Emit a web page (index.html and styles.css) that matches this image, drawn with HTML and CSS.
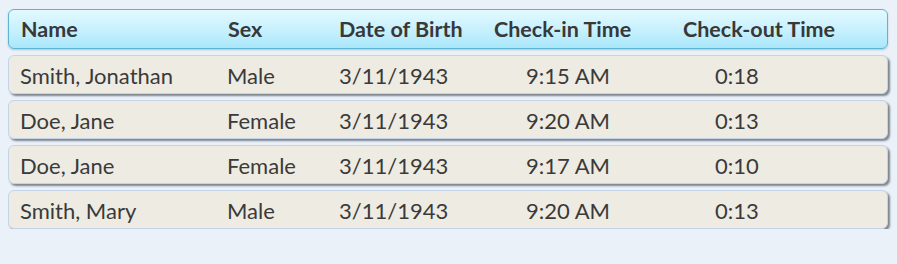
FILE: index.html
```html
<!DOCTYPE html>
<html>
<head>
<meta charset="utf-8">
<link rel="stylesheet" href="styles.css">
</head>
<body>
<div class="table">
  <div class="row head">
    <div class="c name">Name</div>
    <div class="c sex">Sex</div>
    <div class="c dob">Date of Birth</div>
    <div class="c cin">Check-in Time</div>
    <div class="c cout">Check-out Time</div>
  </div>
  <div class="row item">
    <div class="c name">Smith, Jonathan</div>
    <div class="c sex">Male</div>
    <div class="c dob">3/11/1943</div>
    <div class="c cin">9:15 AM</div>
    <div class="c cout">0:18</div>
  </div>
  <div class="row item">
    <div class="c name">Doe, Jane</div>
    <div class="c sex">Female</div>
    <div class="c dob">3/11/1943</div>
    <div class="c cin">9:20 AM</div>
    <div class="c cout">0:13</div>
  </div>
  <div class="row item">
    <div class="c name">Doe, Jane</div>
    <div class="c sex">Female</div>
    <div class="c dob">3/11/1943</div>
    <div class="c cin">9:17 AM</div>
    <div class="c cout">0:10</div>
  </div>
  <div class="row item">
    <div class="c name">Smith, Mary</div>
    <div class="c sex">Male</div>
    <div class="c dob">3/11/1943</div>
    <div class="c cin">9:20 AM</div>
    <div class="c cout">0:13</div>
  </div>
</div>
</body>
</html>
```
FILE: styles.css
```css
html, body {
  margin: 0;
  padding: 0;
  background: #ebf1f9;
}
body {
  padding: 9px 9px 0 8px;
  font-family: Lato, "Open Sans", sans-serif;
  color: #3a3a3a;
}
.table {
  display: flex;
  flex-direction: column;
  gap: 6px;
  width: 880px;
}
.row {
  display: grid;
  grid-template-columns: 207px 111px 155px 189px 1fr;
  align-items: center;
  box-sizing: border-box;
  border-radius: 6px;
}
.head {
  height: 40px;
  border: 1px solid #5cb6d2;
  background: linear-gradient(#e3f9ff, #c6f0fd 55%, #a9e7fb);
  font-weight: bold;
  font-size: 21.5px;
  color: #383838;
  padding-left: 12px;
  box-shadow: 0 1px 2px rgba(80, 110, 140, 0.35);
}
.item {
  height: 39px;
  border: 1px solid #c4d4e6;
  background: #eeebe2;
  font-size: 22px;
  padding-left: 11px;
  box-shadow: 2px 2px 2px rgba(90, 98, 110, 0.75);
}
.item .c { padding-top: 1px; }
.item .dob { padding-left: 1px; }
.item .cin { padding-left: 33px; }
.item .cout { padding-left: 33px; }
```
